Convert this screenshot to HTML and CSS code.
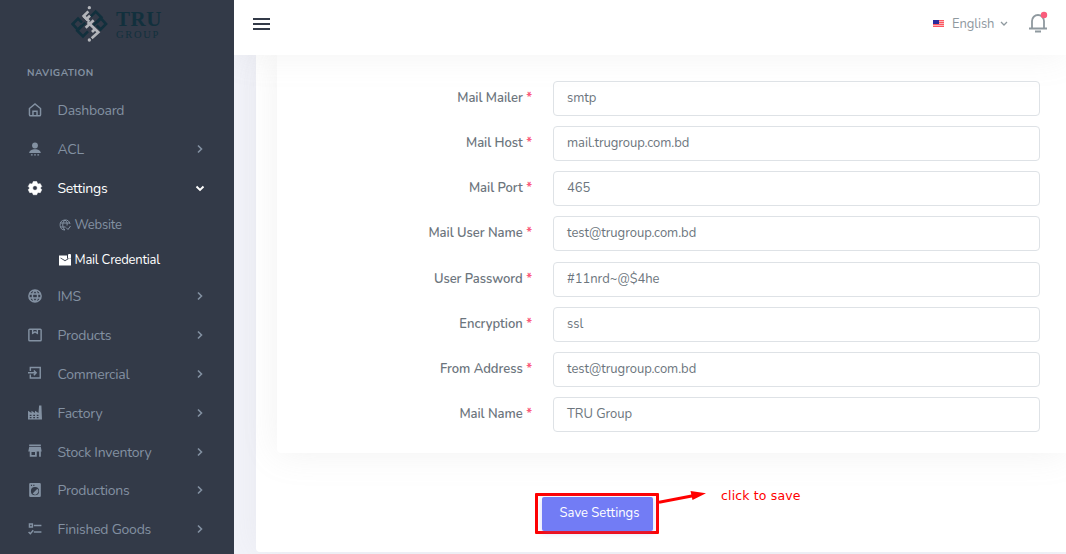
FILE: index.html
```html
<!DOCTYPE html>
<html lang="en">
<head>
<meta charset="utf-8">
<title>Mail Credential</title>
<link rel="stylesheet" href="styles.css">
</head>
<body>
<div class="app">
  <aside class="sidebar">
    <div class="brand">
      <svg class="brand-mark" viewBox="213 15 111 114" fill="none" stroke-width="8" stroke-linejoin="miter">
        <g stroke="#12303d"><path d="M272 50l15-15 17 17-24 24"/><path d="M290 68l13-13 15 17-16 16-12-12"/><path d="M264 94l-15 15-17-17 24-24"/><path d="M246 76l-13 13-15-17 16-16 12 12"/></g>
        <g stroke="#b3b5ba"><path d="M265 34l-14 14 17 17"/><path d="M257 83l24-22"/><path d="M263 66l32 31-20 18"/><path d="M251 48l9 9 10-10"/><path d="M285 87l-9 9"/></g>
        <g fill="#b3b5ba"><circle cx="268" cy="23" r="5"/><circle cx="268" cy="120" r="5"/></g>
      </svg>
      <div class="brand-name"><span class="brand-top">TRU</span><span class="brand-sub">GROUP</span></div>
    </div>
    <div class="nav-title">NAVIGATION</div>
    <nav class="nav">
      <a class="item"><svg class="icon" viewBox="0 0 24 24"><path class="line" d="M2.500 9.500 12 1.500l9.500 8V20a2 2 0 0 1-2 2h-15a2 2 0 0 1-2-2zM8.500 22v-8h7v8"/></svg><span>Dashboard</span></a>
      <a class="item"><svg class="icon" viewBox="0 0 24 24"><circle cx="12" cy="6" r="5"/><path d="M2 19c0-9 20-9 20 0zM5 21h3v2H5zm5.500 0h3v2h-3zm5.500 0h3v2h-3z"/></svg><span>ACL</span><svg class="chev" viewBox="0 0 8 8"><path d="M2 .5l3.500 3.500L2 7.500"/></svg></a>
      <a class="item active"><svg class="icon" viewBox="0 0 24 24"><path stroke="currentColor" stroke-linejoin="round" fill-rule="evenodd" d="M9 1h6l1 3 2 1 3-.5 2.500 5L21 12l2.500 3-2.500 5-3-.5-2 1-1 3H9l-1-3-2-1-3 .5-2.500-5L3 12 .5 9.500 3 4.500 6 5l2-1zM12 8a4 4 0 1 0 0 8 4 4 0 0 0 0-8z"/></svg><span>Settings</span><svg class="chev down" viewBox="0 0 8 8"><path d="M.5 2.500l3.500 3.500 3.500-3.500"/></svg></a>
      <div class="subnav">
        <a class="sub"><svg class="sub-icon" viewBox="0 0 24 24"><path class="line" d="M22 10A10 10 0 1 0 12 22M12 2c-6 5-6 15 0 20M12 2c4 3 5 7 4 11M3 8h18M3 16h10M14 17l4 4 5-7"/></svg><span>Website</span></a>
        <a class="sub active"><svg class="sub-icon" viewBox="0 0 24 24"><path fill-rule="evenodd" d="M0 3h16v6h8v14H0zM3 7v1.500l9 6 7-4.500-1-1-6 3.500z"/><rect x="18" y="0" width="6" height="9" rx="2"/></svg><span>Mail Credential</span></a>
      </div>
      <a class="item"><svg class="icon" viewBox="0 0 24 24"><path class="line" d="M12 1.500a10.500 10.500 0 1 0 0 21 10.500 10.500 0 0 0 0-21zM12 2c-6 5-6 15 0 20M12 2c6 5 6 15 0 20M2 8.500h20M2 15.500h20"/></svg><span>IMS</span><svg class="chev" viewBox="0 0 8 8"><path d="M2 .5l3.500 3.500L2 7.500"/></svg></a>
      <a class="item"><svg class="icon" viewBox="0 0 24 24"><path class="line" d="M3 2h18a1.500 1.500 0 0 1 1.500 1.500v17A1.500 1.500 0 0 1 21 22H3a1.500 1.500 0 0 1-1.500-1.500v-17A1.500 1.500 0 0 1 3 2zM8 2v7l4-2.500L16 9V2"/></svg><span>Products</span><svg class="chev" viewBox="0 0 8 8"><path d="M2 .5l3.500 3.500L2 7.500"/></svg></a>
      <a class="item"><svg class="icon" viewBox="0 0 24 24"><path class="line" d="M4 7V1h17v18H4v-6M0 10h14M10 6l4 4-4 4"/></svg><span>Commercial</span><svg class="chev" viewBox="0 0 8 8"><path d="M2 .5l3.500 3.500L2 7.500"/></svg></a>
      <a class="item"><svg class="icon" viewBox="0 0 24 24"><path fill-rule="evenodd" d="M0 8l6 4V8l6 4V8l6 4 1-13h4l1 24H0zM3 15v2h3v-2zm6 0v2h3v-2zm6 0v2h3v-2zM3 19v2h3v-2zm6 0v2h3v-2zm6 0v2h3v-2z"/></svg><span>Factory</span><svg class="chev" viewBox="0 0 8 8"><path d="M2 .5l3.500 3.500L2 7.500"/></svg></a>
      <a class="item"><svg class="icon" viewBox="0 0 24 24"><path fill-rule="evenodd" d="M2-1h20v3H2zM2 3.500h20l1.500 7.500H22v9h-3v-9h-4v9H3v-9H.5zM6 12v5h6v-5z"/></svg><span>Stock Inventory</span><svg class="chev" viewBox="0 0 8 8"><path d="M2 .5l3.500 3.500L2 7.500"/></svg></a>
      <a class="item"><svg class="icon" viewBox="0 0 24 24"><path fill-rule="evenodd" d="M4 0h16a2 2 0 0 1 2 2v20a2 2 0 0 1-2 2H4a2 2 0 0 1-2-2V2a2 2 0 0 1 2-2zM5 3v2h2V3zm4 0v2h2V3zm3 4a7 7 0 1 0 0 14 7 7 0 0 0 0-14z"/><path d="M8 18a5.500 5.500 0 0 0 8-8z"/></svg><span>Productions</span><svg class="chev" viewBox="0 0 8 8"><path d="M2 .5l3.500 3.500L2 7.500"/></svg></a>
      <a class="item"><svg class="icon" viewBox="0 0 24 24"><path class="line" d="M2.500 3.500h5v5h-5zM10 6h13M10 17h13M1 17l3 3 5-6"/></svg><span>Finished Goods</span><svg class="chev" viewBox="0 0 8 8"><path d="M2 .5l3.500 3.500L2 7.500"/></svg></a>
    </nav>
  </aside>
  <div class="main">
    <header class="topbar">
      <div class="burger"><i></i><i></i><i></i></div>
      <div class="tools">
        <svg class="flag" viewBox="0 0 11 7"><path fill="#f7b5b9" d="M0 0h11v7H0z"/><path stroke="#ff5660" d="M0 .5h11M0 2.500h11M0 4.500h11M0 6.500h11"/><path fill="#2b2b9c" d="M0 0h6v4H0z"/></svg>
        <span class="lang">English</span>
        <svg class="lang-chev" viewBox="0 0 8 8"><path d="M1 2l3 3 3-3"/></svg>
        <svg class="bell" viewBox="0 0 18 21"><path d="M3 16V9a6 6 0 0 1 12 0v7M0 16.500h18M6 19.500h6"/><circle cx="15" cy="3" r="3.200"/></svg>
      </div>
    </header>
    <div class="page">
      <section class="panel">
        <form class="card">
          <label class="row"><span class="label">Mail Mailer <b>*</b></span><span class="field">smtp</span></label>
          <label class="row"><span class="label">Mail Host <b>*</b></span><span class="field">mail.trugroup.com.bd</span></label>
          <label class="row"><span class="label">Mail Port <b>*</b></span><span class="field">465</span></label>
          <label class="row"><span class="label">Mail User Name <b>*</b></span><span class="field">test@trugroup.com.bd</span></label>
          <label class="row"><span class="label">User Password <b>*</b></span><span class="field">#11nrd~@$4he</span></label>
          <label class="row"><span class="label">Encryption <b>*</b></span><span class="field">ssl</span></label>
          <label class="row"><span class="label">From Address <b>*</b></span><span class="field">test@trugroup.com.bd</span></label>
          <label class="row"><span class="label">Mail Name <b>*</b></span><span class="field">TRU Group</span></label>
        </form>
        <div class="actions">
          <div class="callout"><button class="save" type="button">Save Settings</button></div>
          <svg class="arrow" viewBox="0 0 48 14"><path d="M0 11.300 34 4.800" stroke="#f00" stroke-width="3"/><path d="M31.500 0 47 2.200 33.500 9z" fill="#f00"/></svg>
          <span class="note">click to save</span>
        </div>
      </section>
    </div>
  </div>
</div>
</body>
</html>
```
FILE: styles.css
```css
* { box-sizing: border-box; }
body { margin: 0; font-family: Nunito, "Noto Sans", sans-serif; font-size: 13px; color: #6c757d; overflow: hidden; }
.app { display: flex; width: 1066px; height: 554px; overflow: hidden; }
.sidebar { width: 234px; flex: none; background: #333a48; color: #8391a2; }
.brand { height: 60px; padding: 5px 0 0 71px; display: flex; gap: 8px; }
.brand-mark { width: 37px; height: 38px; }
.brand-name { color: #12303d; font-family: "Liberation Serif", serif; display: flex; flex-direction: column; padding-top: 2px; }
.brand-top { font-size: 21px; line-height: 24px; height: 22px; font-weight: bold; letter-spacing: .5px; }
.brand-sub { font-size: 10.5px; line-height: 12px; letter-spacing: 1.7px; }
.nav-title { padding-left: 27px; height: 31px; line-height: 27px; font-size: 10px; font-weight: 700; letter-spacing: .4px; }
.item { height: 38.8px; padding: 0 30px 0 28px; display: flex; align-items: center; font-size: 14px; letter-spacing: -.24px; white-space: nowrap; }
.item span { padding-top: 1px; }
.icon { width: 14px; height: 14px; margin-right: 15.5px; fill: currentColor; overflow: visible; }
.line { fill: none; stroke: currentColor; stroke-width: 2.5; }
.sub-icon .line { stroke-width: 2; }
.active { color: #fff; }
.chev { width: 8px; height: 8px; margin-left: auto; fill: none; stroke: currentColor; stroke-width: 1.6; overflow: visible; }
.down { stroke-width: 1.9; }
.subnav { height: 69.6px; }
.sub { height: 34.8px; padding-left: 59px; display: flex; align-items: center; gap: 3.5px; font-size: 13px; letter-spacing: -.22px; white-space: nowrap; }
.sub-icon { width: 12px; height: 12px; fill: currentColor; overflow: visible; }
.main { flex: 1; min-width: 0; display: flex; flex-direction: column; background: #f2f3f9; overflow: hidden; }
.topbar { height: 55px; flex: none; background: #fff; padding: 0 19px; display: flex; justify-content: space-between; position: relative; box-shadow: 0 0 35px rgba(160,160,160,.13); }
.burger { padding-top: 18px; display: flex; flex-direction: column; gap: 3px; }
.burger i { width: 17px; height: 2px; background: #333a48; }
.tools { display: flex; height: 47px; align-items: center; color: #8f999f; font-size: 13px; }
.flag { width: 11px; height: 7px; margin-right: 8px; }
.lang { width: 42px; letter-spacing: -.1px; }
.lang-chev { width: 8px; height: 8px; margin: 0 21px 0 6px; fill: none; stroke: currentColor; stroke-width: 1.3; }
.bell { width: 18px; height: 21px; margin-top: -2px; fill: none; stroke: #8f999f; stroke-width: 1.8; overflow: visible; }
.bell circle { fill: #fa5c7c; stroke: none; }
.page { flex: 1; padding: 0 0 2px 22px; }
.panel { height: 497px; background: #fff; border-radius: 0 0 0 4px; padding-left: 21px; box-shadow: 0 0 35px rgba(154,161,171,.1); }
.card { height: 398px; background: #fff; border-radius: 0 0 0 4px; padding-top: 26px; box-shadow: 0 0 35px rgba(160,160,160,.15); }
.row { height: 45.15px; display: flex; }
.label { width: 255px; height: 34px; line-height: 34.4px; margin-right: 21px; text-align: right; font-weight: 600; letter-spacing: -.03px; white-space: nowrap; }
.label b { color: #fa5c7c; font-weight: 700; }
.field { width: 487px; height: 35px; line-height: 32.4px; padding-left: 13px; border: 1px solid #dee2e6; border-radius: 4px; letter-spacing: -.04px; white-space: nowrap; }
.actions { padding: 40px 0 0 258px; display: flex; }
.callout { width: 124px; height: 41px; border: 3px solid #f00; border-radius: 1px; padding: 1px 3px 0 4px; }
.save { width: 111px; height: 34px; border: 0; border-radius: 2px; padding: 0 0 2px 4px; background: #727cf5; color: #fff; font: 13px Nunito, "Noto Sans", sans-serif; white-space: nowrap; box-shadow: 0 2px 6px rgba(114,124,245,.3); }
.arrow { width: 48px; height: 14px; margin-top: -2px; }
.note { margin: -6px 0 0 14px; color: #f00; font: 12.5px/18px "DejaVu Sans", sans-serif; letter-spacing: .15px; white-space: nowrap; }
```
